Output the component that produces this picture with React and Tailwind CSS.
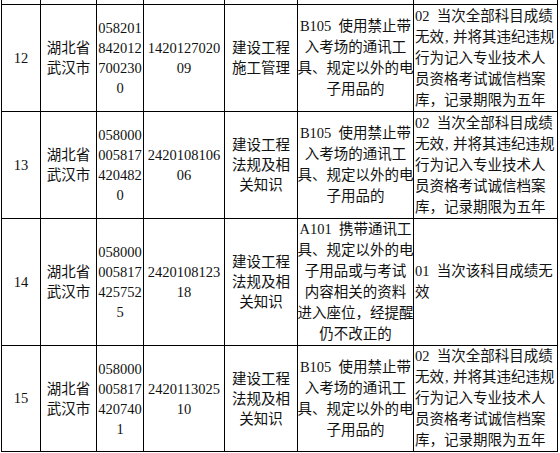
import React from "react";

const rows = [
  {
    no: "12",
    id: ["058201", "842012", "700230", "0"],
    exam: ["1420127020", "09"],
    subject: ["建设工程", "施工管理"],
    rule: "b105",
    penalty: "02",
    h: "h-[107px]",
  },
  {
    no: "13",
    id: ["058000", "005817", "420482", "0"],
    exam: ["2420108106", "06"],
    subject: ["建设工程", "法规及相", "关知识"],
    rule: "b105",
    penalty: "02",
    h: "h-[107px]",
  },
  {
    no: "14",
    id: ["058000", "005817", "425752", "5"],
    exam: ["2420108123", "18"],
    subject: ["建设工程", "法规及相", "关知识"],
    rule: "a101",
    penalty: "01",
    h: "h-[127px]",
  },
  {
    no: "15",
    id: ["058000", "005817", "420740", "1"],
    exam: ["2420113025", "10"],
    subject: ["建设工程", "法规及相", "关知识"],
    rule: "b105",
    penalty: "02",
    h: "h-[106px]",
  },
];

const rules = {
  b105: [
    <>B105{"\u2002"}使用禁止带</>,
    "入考场的通讯工",
    "具、规定以外的电",
    "子用品的",
  ],
  a101: [
    <>A101{"\u2002"}携带通讯工</>,
    "具、规定以外的电",
    "子用品或与考试",
    "内容相关的资料",
    "进入座位，经提醒",
    "仍不改正的",
  ],
};

const penalties = {
  "02": [
    <>02{"\u2002"}当次全部科目成绩</>,
    <>无效<span className="inline-block w-[9px] pl-[1px]">,</span>并将其违纪违规</>,
    "行为记入专业技术人",
    "员资格考试诚信档案",
    "库，记录期限为五年",
  ],
  "01": [<>01{"\u2002"}当次该科目成绩无</>, "效"],
};

function Cell({ lines, left, leading = "leading-[21px]", h }) {
  return (
    <div
      className={`${h} border-r border-b border-black flex flex-col justify-center ${
        left ? "items-start pl-[1px]" : "items-center"
      } ${leading}`}
    >
      {lines.map((l, i) => (
        <div key={i} className="whitespace-nowrap">
          {l}
        </div>
      ))}
    </div>
  );
}

export default function App() {
  return (
    <div className="w-[560px] h-[453px] bg-white overflow-hidden">
      <div className="ml-[1px] w-[557px] grid grid-cols-[39px_56px_47px_81px_73px_116px_144px] border-l border-black text-[14.5px] text-[#111] font-['Liberation_Serif','Noto_Sans_CJK_SC',serif]">
        {/* tail of the previous row */}
        {[0, 1, 2, 3, 4, 5, 6].map((i) => (
          <div key={i} className="h-[5px] border-r border-b border-black" />
        ))}

        {rows.map((r) => (
          <React.Fragment key={r.no}>
            <Cell h={r.h} lines={[r.no]} />
            <Cell h={r.h} lines={["湖北省", "武汉市"]} leading="leading-[20px]" />
            <Cell h={r.h} lines={r.id} leading="leading-[20px]" />
            <Cell h={r.h} lines={r.exam} leading="leading-[20px]" />
            <Cell h={r.h} lines={r.subject} leading="leading-[20px]" />
            <Cell h={r.h} lines={rules[r.rule]} />
            <Cell h={r.h} lines={penalties[r.penalty]} left />
          </React.Fragment>
        ))}
      </div>
    </div>
  );
}
